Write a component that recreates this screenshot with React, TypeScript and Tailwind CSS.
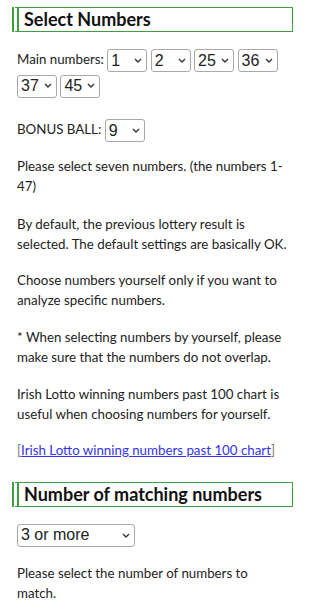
import { ReactNode } from "react";

function Heading({ children }: { children: ReactNode }) {
  return (
    <h2 className="ml-3 mr-[7px] border border-l-[7px] border-double border-[#3f9f3f] pl-[5px] text-[18px] font-bold leading-[23px] text-[#111]">
      {children}
    </h2>
  );
}

function Pick({ value, options, w = "w-[40px]" }: { value: string; options: string[]; w?: string }) {
  return (
    <span className={`relative inline-block align-middle ${w}`}>
      <select
        defaultValue={value}
        className="h-[23px] w-full appearance-none rounded-[3px] border border-[#a8a8a8] bg-white pl-[3px] font-['Liberation_Sans',Arial,sans-serif] text-[16px] leading-[20px] text-[#222]"
      >
        {options.map((o) => (
          <option key={o} value={o}>
            {o}
          </option>
        ))}
      </select>
      <svg
        className="pointer-events-none absolute right-[5px] top-[9px] h-[5px] w-[8px]"
        viewBox="0 0 8 5"
        fill="none"
        stroke="#333"
        strokeWidth="1.4"
      >
        <path d="M1 1l3 3 3-3" />
      </svg>
    </span>
  );
}

const nums = Array.from({ length: 47 }, (_, i) => String(i + 1));

export default function App() {
  return (
    <div className="min-h-[616px] w-[300px] overflow-hidden bg-white pt-[7px] font-['Lato','Liberation_Sans',sans-serif] text-[13.3px] leading-[20.5px] text-[#222]">
      <Heading>Select Numbers</Heading>

      <div className="px-[17px] pr-[10px] pt-[15px]">
        <p className="leading-[24px]">
          Main numbers: <Pick value="1" options={nums} /> <Pick value="2" options={nums} />{" "}
          <Pick value="25" options={nums} /> <Pick value="36" options={nums} />{" "}
          <Pick value="37" options={nums} /> <Pick value="45" options={nums} />
        </p>

        <p className="mt-[19px] leading-[24px]">
          BONUS BALL: <Pick value="9" options={nums} />
        </p>

        <p className="mt-[13px]">Please select seven numbers. (the numbers 1-47)</p>
        <p className="mt-[17px]">
          By default, the previous lottery result is selected. The default settings are basically OK.
        </p>
        <p className="mt-[15px]">Choose numbers yourself only if you want to analyze specific numbers.</p>
        <p className="mt-[16px]">
          * When selecting numbers by yourself, please make sure that the numbers do not overlap.
        </p>
        <p className="mt-[16px]">
          Irish Lotto winning numbers past 100 chart is useful when choosing numbers for yourself.
        </p>
        <p className="mt-[15px] text-[#777]">
          [
          <a href="#" className="text-[#3333ee] underline">
            Irish Lotto winning numbers past 100 chart
          </a>
          ]
        </p>
      </div>

      <div className="mt-[22px]">
        <Heading>Number of matching numbers</Heading>
      </div>

      <div className="px-[17px] pr-[10px] pt-[16px]">
        <Pick value="3 or more" options={["3 or more", "4 or more", "5 or more", "6 or more"]} w="w-[118px]" />
        <p className="mt-[16px]">Please select the number of numbers to match.</p>
      </div>
    </div>
  );
}
